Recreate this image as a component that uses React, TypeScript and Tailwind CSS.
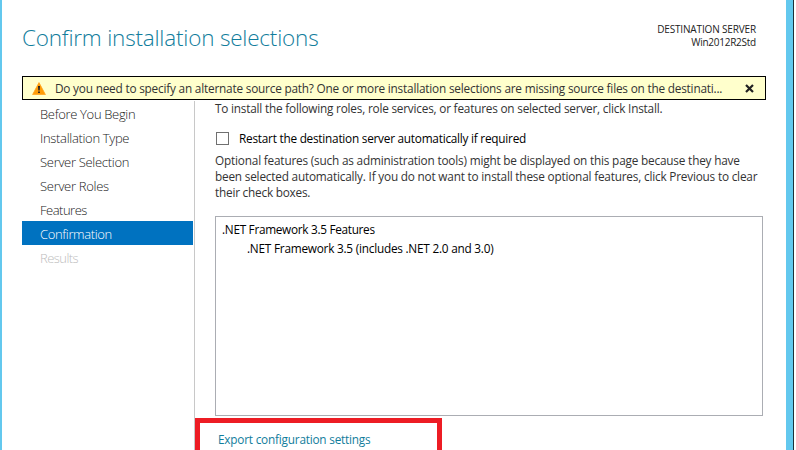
const steps = [
  { label: 'Before You Begin', tracking: 'tracking-[-0.33px]' },
  { label: 'Installation Type', tracking: 'tracking-[-0.32px]' },
  { label: 'Server Selection', tracking: 'tracking-[-0.3px]' },
  { label: 'Server Roles', tracking: 'tracking-[-0.3px]' },
  { label: 'Features', tracking: 'tracking-[-0.5px]' },
  { label: 'Confirmation', tracking: 'tracking-[-0.36px]' },
  { label: 'Results', tracking: 'tracking-[-0.55px]' },
];

function stepColor(label: string) {
  if (label === 'Confirmation') return 'bg-[#0072c0] text-white';
  if (label === 'Results') return 'text-[#bdbdbd]';
  return 'text-[#222]';
}

function Warning() {
  return (
    <svg className="ml-[9px] h-[13px] w-[14px] shrink-0" viewBox="0 0 14 13">
      <path d="M7 .6 13.4 12.6H.6Z" fill="#ff9c08" stroke="#ffa21a" strokeWidth=".8" strokeLinejoin="round" />
      <path d="M6 4h2l-.3 4.6H6.3ZM6.1 9.4h1.8v1.7H6.1Z" fill="#222" />
    </svg>
  );
}

export default function App() {
  return (
    <div className="flex h-[450px] w-[796px] overflow-hidden whitespace-nowrap bg-white font-['Open_Sans','Noto_Sans',sans-serif] text-[11.8px] leading-4 text-[#333]">
      <div className="w-[2px] shrink-0 bg-[#63c8ee]" />
      <main className="flex w-[784px] shrink-0 flex-col pl-5">
        <header className="flex h-[76px] shrink-0 justify-between pr-[30px]">
          <h1 className="pt-[22px] text-[22.5px] font-light leading-8 tracking-[-0.2px] text-[#117d9c]">Confirm installation selections</h1>
          <div className="pt-[23px] text-right text-[10px] leading-[13px] text-[#222]">
            <div className="tracking-[-0.15px]">DESTINATION SERVER</div>
            <div className="tracking-[-0.25px]">Win2012R2Std</div>
          </div>
        </header>
        <div className="flex h-6 w-[744px] shrink-0 items-center border border-black bg-[#ffffcc]">
          <Warning />
          <span className="ml-[9px] tracking-[-0.2px]">Do you need to specify an alternate source path? One or more installation selections are missing source files on the destinati...</span>
          <svg className="ml-auto mr-[11px] h-[9px] w-[9px] shrink-0" viewBox="0 0 9 9">
            <path d="m1 1 7 7M8 1 1 8" stroke="#222" strokeWidth="2.2" />
          </svg>
        </div>
        <div className="flex h-[350px]">
          <nav className="mt-[1px] w-[173px] shrink-0 border-r border-[#c8c8c8] pr-[1px]">
            {steps.map((s) => (
              <div key={s.label} className={`h-6 w-[171px] pl-[18px] pt-px text-[13px] font-light leading-6 ${s.tracking} ${stepColor(s.label)}`}>
                {s.label}
              </div>
            ))}
          </nav>
          <section className="flex w-[570px] shrink-0 flex-col">
            <div className="pl-5">
              <p className="tracking-[-0.21px]">To install the following roles, role services, or features on selected server, click Install.</p>
              <label className="mt-[14px] flex h-4 items-start text-black">
                <span className="ml-[1px] mt-[2px] h-[13px] w-[13px] border border-[#707070] bg-white" />
                <span className="ml-[10px] tracking-[-0.24px]">Restart the destination server automatically if required</span>
              </label>
              <div className="mt-[6px]">
                <p className="tracking-[-0.19px]">Optional features (such as administration tools) might be displayed on this page because they have</p>
                <p className="tracking-[-0.2px]">been selected automatically. If you do not want to install these optional features, click Previous to clear</p>
                <p className="tracking-[-0.22px]">their check boxes.</p>
              </div>
              <div className="mt-[16px] h-[200px] w-[548px] border border-[#abadb3] pl-[6px] pt-[4px] text-black">
                <p className="tracking-[-0.3px]">.NET Framework 3.5 Features</p>
                <p className="mt-[3px] pl-[25px] tracking-[-0.23px]">.NET Framework 3.5 (includes .NET 2.0 and 3.0)</p>
              </div>
            </div>
            <div className="mt-[2px] h-[32px] w-[247px] shrink-0 border-[5px] border-b-0 border-[#ed1c24] pl-[18px] pt-[8px] text-[#117d9c]">
              <span className="tracking-[-0.21px]">Export configuration settings</span>
            </div>
          </section>
        </div>
      </main>
      <div className="w-[7px] shrink-0 bg-[#63c8ee]" />
      <div className="w-px shrink-0 bg-[#1f3038]" />
    </div>
  );
}
